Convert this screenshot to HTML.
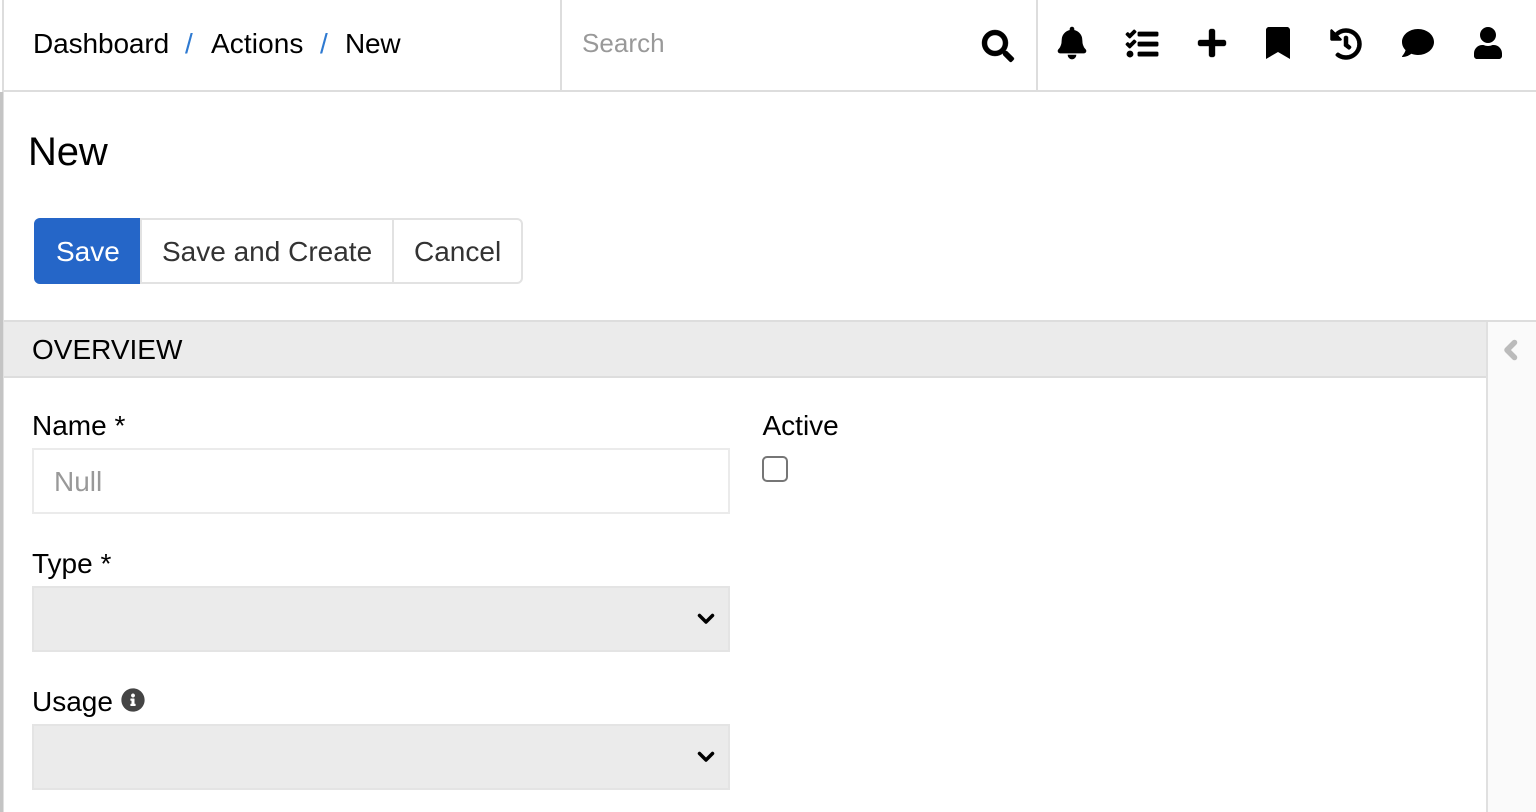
<!DOCTYPE html>
<html lang="en"><head><meta charset="utf-8"><title>New</title>
<style>
html,body{margin:0;padding:0;width:1536px;height:812px;overflow:hidden;background:#fff}
body{position:relative;font-family:"Liberation Sans",Arial,sans-serif;color:#000}
.a{position:absolute}
.t{position:absolute;white-space:nowrap;line-height:32px;font-size:28px}
svg{position:absolute;display:block;overflow:visible}
</style></head><body>
<div class="a" style="left:2px;top:0;width:2px;height:90px;background:#ddd"></div>
<div class="a" style="left:0;top:92px;width:3px;height:720px;background:#c4c4c4"></div>
<div class="a" style="left:3px;top:92px;width:1px;height:720px;background:#e0e0e0"></div>
<div class="a" style="left:2px;top:90px;width:1534px;height:2px;background:#ddd"></div>
<div class="a" style="left:560px;top:0;width:2px;height:90px;background:#ddd"></div>
<div class="a" style="left:1036px;top:0;width:2px;height:90px;background:#ddd"></div>

<div class="t" style="left:33px;top:28px;letter-spacing:-.1px">Dashboard</div>
<div class="t" style="left:185px;top:28px;color:#2f7ad1">/</div>
<div class="t" style="left:211px;top:28px;letter-spacing:.1px">Actions</div>
<div class="t" style="left:320px;top:28px;color:#2f7ad1">/</div>
<div class="t" style="left:345px;top:28px;letter-spacing:-.2px">New</div>
<div class="t" style="left:582px;top:27px;color:#999;font-size:26px;letter-spacing:.05px">Search</div>

<svg style="left:982px;top:30px" width="32" height="32" viewBox="0 0 512 512"><path stroke="#000" stroke-width="6" d="M505 442.7L405.3 343c-4.5-4.5-10.6-7-17-7H372c27.6-35.3 44-79.7 44-128C416 93.1 322.9 0 208 0S0 93.1 0 208s93.1 208 208 208c48.3 0 92.7-16.4 128-44v16.3c0 6.4 2.5 12.5 7 17l99.7 99.7c9.4 9.4 24.6 9.4 33.9 0l28.3-28.3c9.4-9.4 9.4-24.6.1-34zM208 336c-70.7 0-128-57.2-128-128 0-70.7 57.2-128 128-128 70.7 0 128 57.2 128 128 0 70.7-57.2 128-128 128z"/></svg>
<svg style="left:1058px;top:27px" width="28" height="32" viewBox="0 0 448 512"><path stroke="#000" stroke-width="10" d="M224 512c35.32 0 63.97-28.65 63.97-64H160.03c0 35.35 28.65 64 63.97 64zm215.39-149.71c-19.32-20.76-55.47-51.99-55.47-154.29 0-77.7-54.48-139.9-127.94-155.16V32c0-17.67-14.32-32-31.98-32s-31.98 14.33-31.98 32v20.84C118.56 68.1 64.08 130.3 64.08 208c0 102.3-36.15 133.53-55.47 154.29-6 6.45-8.66 14.16-8.61 21.71.11 16.4 12.98 32 32.1 32h383.8c19.12 0 32-15.6 32.1-32 .05-7.55-2.61-15.27-8.61-21.71z"/></svg>
<svg style="left:1126px;top:27.5px" width="32" height="32" viewBox="0 0 512 512"><path stroke="#000" stroke-width="14" d="M139.61 35.5a12 12 0 0 0-17 0L58.93 98.81l-22.7-22.12a12 12 0 0 0-17 0L3.53 92.41a12 12 0 0 0 0 17l47.59 47.4a12.78 12.78 0 0 0 17.61 0l15.59-15.62L156.52 69a12.09 12.09 0 0 0 .09-17zm0 159.19a12 12 0 0 0-17 0l-63.68 63.72-22.7-22.1a12 12 0 0 0-17 0L3.53 252a12 12 0 0 0 0 17L51 316.5a12.77 12.77 0 0 0 17.6 0l15.7-15.69 72.2-72.22a12 12 0 0 0 .09-16.9zM64 368c-26.49 0-48.59 21.5-48.59 48S37.53 464 64 464a48 48 0 0 0 0-96zm432 16H208a16 16 0 0 0-16 16v32a16 16 0 0 0 16 16h288a16 16 0 0 0 16-16v-32a16 16 0 0 0-16-16zm0-320H208a16 16 0 0 0-16 16v32a16 16 0 0 0 16 16h288a16 16 0 0 0 16-16V80a16 16 0 0 0-16-16zm0 160H208a16 16 0 0 0-16 16v32a16 16 0 0 0 16 16h288a16 16 0 0 0 16-16v-32a16 16 0 0 0-16-16z"/></svg>
<svg style="left:1198px;top:27px" width="28" height="32" viewBox="0 0 448 512"><path stroke="#000" stroke-width="6" d="M416 208H272V64c0-17.67-14.33-32-32-32h-32c-17.67 0-32 14.33-32 32v144H32c-17.67 0-32 14.33-32 32v32c0 17.67 14.33 32 32 32h144v144c0 17.67 14.33 32 32 32h32c17.67 0 32-14.33 32-32V304h144c17.67 0 32-14.33 32-32v-32c0-17.67-14.33-32-32-32z"/></svg>
<svg style="left:1266px;top:27px" width="24" height="32" viewBox="0 0 384 512"><path d="M0 512V48C0 21.49 21.49 0 48 0h288c26.51 0 48 21.49 48 48v464L192 400 0 512z"/></svg>
<svg style="left:1330px;top:27.5px" width="32" height="32" viewBox="0 0 512 512"><path stroke="#000" stroke-width="8" d="M504 255.531c.253 136.64-111.18 248.372-247.82 248.468-59.015.042-113.223-20.53-155.822-54.911-11.077-8.94-11.905-25.541-1.839-35.607l11.267-11.267c8.609-8.609 22.353-9.551 31.891-1.984C173.062 425.135 212.781 440 256 440c101.705 0 184-82.311 184-184 0-101.705-82.311-184-184-184-48.814 0-93.149 18.969-126.068 49.932l50.754 50.754c10.08 10.08 2.941 27.314-11.313 27.314H24c-8.837 0-16-7.163-16-16V38.627c0-14.254 17.234-21.393 27.314-11.314l49.372 49.372C129.209 34.136 189.552 8 256 8c136.81 0 247.747 110.78 248 247.531zm-180.912 78.784l9.823-12.63c8.138-10.463 6.253-25.542-4.21-33.679L288 256.349V152c0-13.255-10.745-24-24-24h-16c-13.255 0-24 10.745-24 24v135.651l65.409 50.874c10.463 8.137 25.541 6.253 33.679-4.21z"/></svg>
<svg style="left:1402px;top:27px" width="32" height="32" viewBox="0 0 512 512"><path d="M256 32C114.6 32 0 125.1 0 240c0 49.6 21.4 95 57 130.7C44.5 421.1 2.7 466 2.2 466.5c-2.2 2.3-2.8 5.7-1.5 8.7S4.8 480 8 480c66.3 0 116-31.8 140.6-51.4 32.7 12.3 69 19.4 107.4 19.4 141.4 0 256-93.1 256-208S397.4 32 256 32z"/></svg>
<svg style="left:1474px;top:27px" width="28" height="32" viewBox="0 0 448 512"><path d="M224 256c70.7 0 128-57.3 128-128S294.7 0 224 0 96 57.3 96 128s57.3 128 128 128zm89.6 32h-16.7c-22.2 10.2-46.9 16-72.9 16s-50.6-5.8-72.9-16h-16.7C60.2 288 0 348.2 0 422.4V464c0 26.5 21.5 48 48 48h352c26.5 0 48-21.5 48-48v-41.6c0-74.2-60.2-134.4-134.4-134.4z"/></svg>

<div class="t" style="left:28px;top:132px;font-size:40px;line-height:40px;letter-spacing:-.1px">New</div>

<div class="a" style="left:34px;top:218px;width:489px;height:66px;box-sizing:border-box;border:2px solid #e2e2e2;border-radius:6px;background:#fff"></div>
<div class="a" style="left:34px;top:218px;width:106px;height:66px;background:#2566c8;border-radius:6px 0 0 6px"></div>
<div class="a" style="left:140px;top:218px;width:2px;height:66px;background:#e2e2e2"></div>
<div class="a" style="left:392px;top:218px;width:2px;height:66px;background:#e2e2e2"></div>
<div class="t" style="left:56px;top:236px;color:#fff">Save</div>
<div class="t" style="left:162px;top:236px;color:#333">Save and Create</div>
<div class="t" style="left:414px;top:236px;color:#333">Cancel</div>

<div class="a" style="left:4px;top:320px;width:1532px;height:2px;background:#ddd"></div>
<div class="a" style="left:4px;top:322px;width:1482px;height:54px;background:#ebebeb"></div>
<div class="a" style="left:4px;top:376px;width:1482px;height:2px;background:#ddd"></div>
<div class="a" style="left:1486px;top:322px;width:2px;height:490px;background:#e0e0e0"></div>
<div class="a" style="left:1488px;top:322px;width:48px;height:490px;background:#fafafa"></div>
<svg style="left:1503px;top:339px" width="15" height="22" viewBox="0 0 15 22"><path d="M11.5 3.5L4 11l7.500 7.500" fill="none" stroke="#bbb" stroke-width="5.500" stroke-linecap="round" stroke-linejoin="round"/></svg>
<div class="t" style="left:32px;top:334px">OVERVIEW</div>

<div class="t" style="left:32px;top:410px">Name *</div>
<div class="a" style="left:32px;top:448px;width:698px;height:66px;box-sizing:border-box;border:2px solid #ebebeb;background:#fff"></div>
<div class="t" style="left:54px;top:466px;color:#999">Null</div>

<div class="t" style="left:762.5px;top:410px">Active</div>
<div class="a" style="left:762px;top:456px;width:26px;height:26px;box-sizing:border-box;border:2px solid #767676;border-radius:5px;background:#fff"></div>

<div class="t" style="left:32px;top:548px">Type *</div>
<div class="a" style="left:32px;top:586px;width:698px;height:66px;box-sizing:border-box;border:2px solid #e4e4e4;background:#ebebeb"></div>
<svg style="left:696px;top:612px" width="20" height="14" viewBox="0 0 20 14"><path d="M3.500 3.500L10 10l6.500-6.500" fill="none" stroke="#000" stroke-width="3.500" stroke-linecap="round" stroke-linejoin="round"/></svg>

<div class="t" style="left:32px;top:686px">Usage</div>
<svg style="left:121px;top:688px" width="24" height="24" viewBox="0 0 512 512"><path fill="#444" d="M256 8C119 8 8 119.1 8 256c0 137 111 248 248 248s248-111 248-248C504 119.1 393 8 256 8zm0 110c23.2 0 42 18.8 42 42s-18.8 42-42 42-42-18.8-42-42 18.8-42 42-42zm56 254c0 6.6-5.4 12-12 12h-88c-6.6 0-12-5.4-12-12v-24c0-6.6 5.4-12 12-12h12v-64h-12c-6.6 0-12-5.4-12-12v-24c0-6.6 5.4-12 12-12h64c6.6 0 12 5.4 12 12v100h12c6.6 0 12 5.4 12 12v24z"/></svg>
<div class="a" style="left:32px;top:724px;width:698px;height:66px;box-sizing:border-box;border:2px solid #e4e4e4;background:#ebebeb"></div>
<svg style="left:696px;top:750px" width="20" height="14" viewBox="0 0 20 14"><path d="M3.500 3.500L10 10l6.500-6.500" fill="none" stroke="#000" stroke-width="3.500" stroke-linecap="round" stroke-linejoin="round"/></svg>
</body></html>
